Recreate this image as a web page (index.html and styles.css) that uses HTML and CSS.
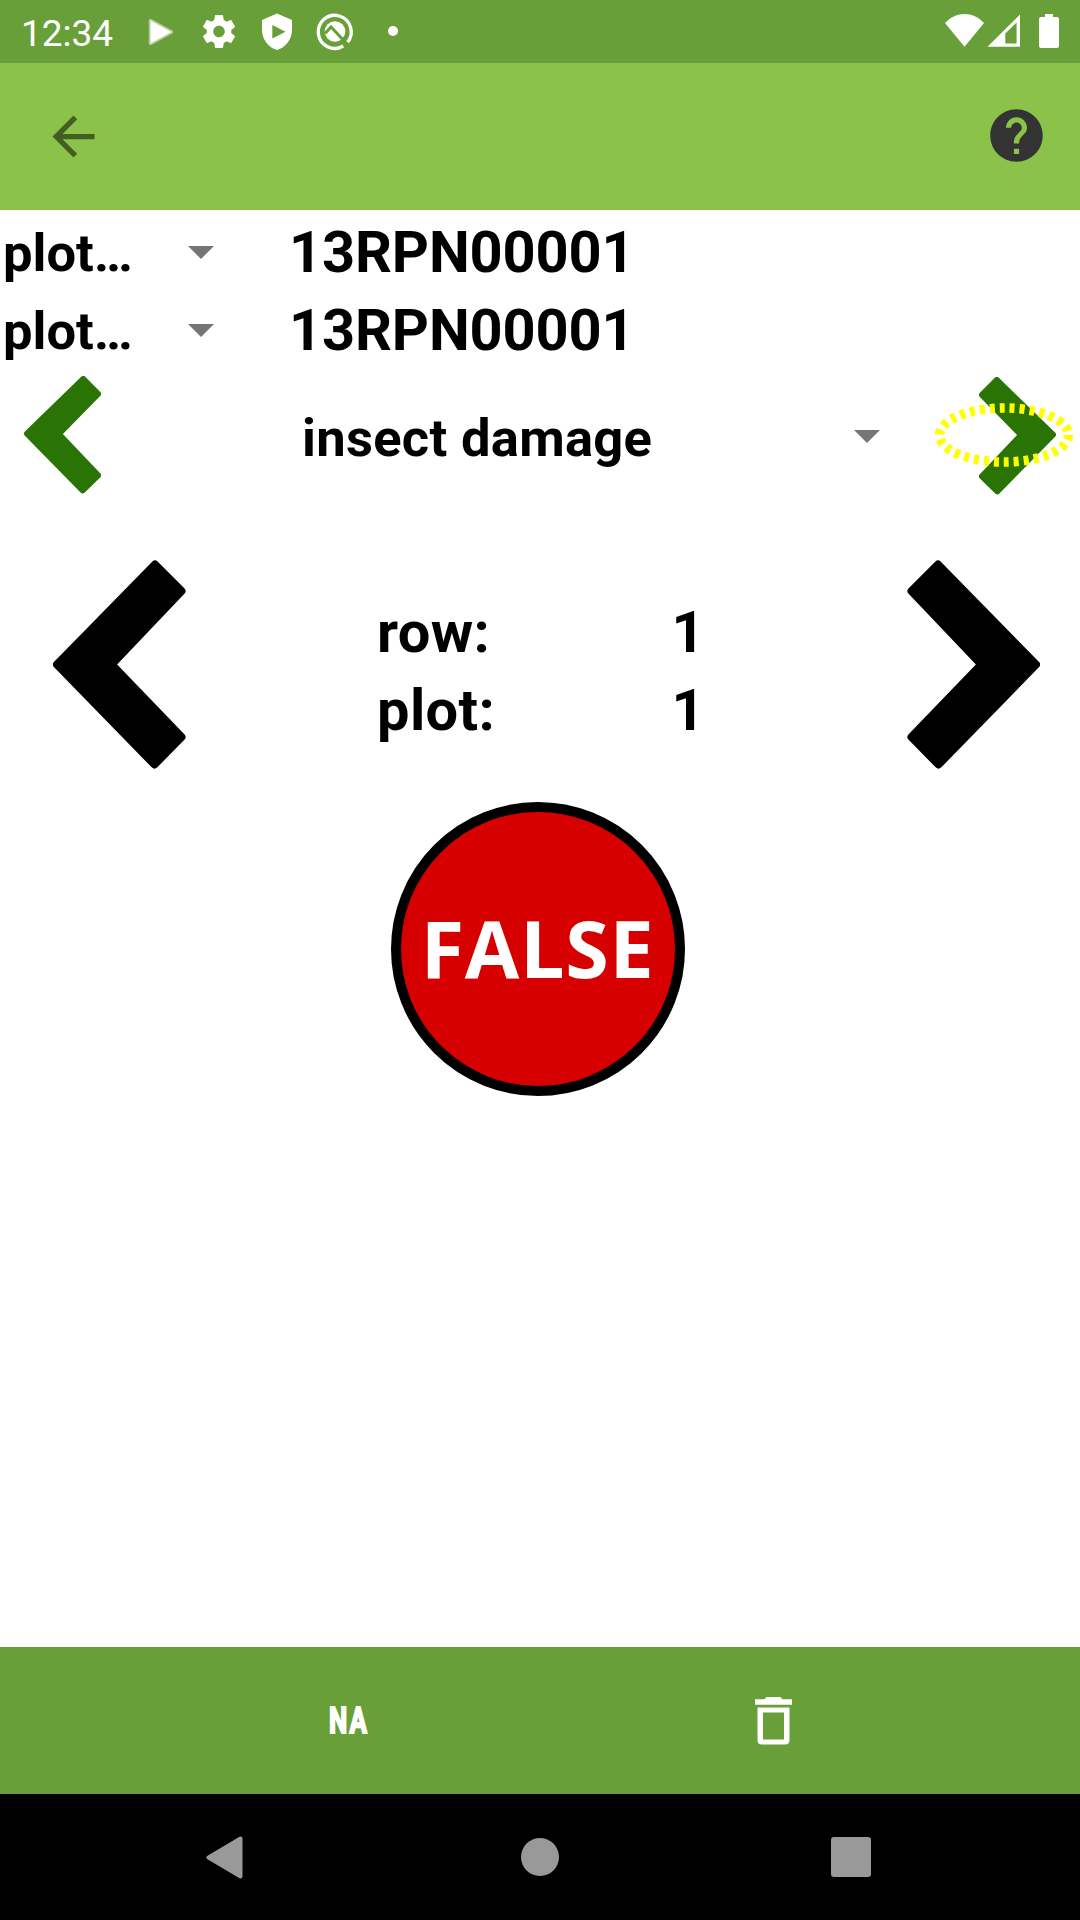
FILE: index.html
```html
<!DOCTYPE html>
<html lang="en">
<head>
<meta charset="utf-8">
<title>Collect</title>
<link rel="stylesheet" href="styles.css">
</head>
<body>
<div class="screen">
  <header class="status-bar">
    <span class="clock">12:34</span>
    <svg class="status-left" width="260" height="63" viewBox="140 0 260 63" fill="#fff">
      <path d="M150.500 20.500V43.500L171.500 32z" stroke="#fff" stroke-opacity=".5" stroke-width="3.500" stroke-linejoin="round"/>
      <g transform="translate(199.300 11.800) scale(1.642)"><path d="M19.430 12.980c.04-.32.07-.64.07-.98s-.03-.66-.07-.98l2.110-1.650c.19-.15.24-.42.12-.64l-2-3.460c-.12-.22-.39-.3-.61-.22l-2.490 1c-.52-.4-1.080-.73-1.690-.98l-.38-2.650C14.460 2.180 14.250 2 14 2h-4c-.25 0-.46.18-.49.42l-.38 2.650c-.61.25-1.170.59-1.690.98l-2.490-1c-.23-.09-.49 0-.61.22l-2 3.460c-.13.22-.07.49.12.64l2.110 1.650c-.04.32-.07.65-.07.98s.03.66.07.98l-2.110 1.650c-.19.15-.24.42-.12.64l2 3.460c.12.22.39.3.61.22l2.490-1c.52.4 1.080.73 1.690.98l.38 2.650c.03.24.24.42.49.42h4c.25 0 .46-.18.49-.42l.38-2.650c.61-.25 1.170-.59 1.690-.98l2.490 1c.23.09.49 0 .61-.22l2-3.460c.12-.22.07-.49-.12-.64l-2.110-1.650zM12 15.500c-1.930 0-3.500-1.570-3.500-3.500s1.570-3.500 3.500-3.500 3.500 1.570 3.500 3.500-1.570 3.500-3.500 3.500z"/></g>
      <path fill-rule="evenodd" d="M277 13.500l-15 6.500v10c0 9.200 6.300 17.600 15 20 8.700-2.400 15-10.800 15-20V20zM272.300 25v13.500L285.500 31.700z"/>
      <g fill="none" stroke="#fff" stroke-width="3.300"><path d="M343.200 46A16.500 16.500 0 1 1 347.500 42.300"/></g>
      <circle cx="335" cy="31.500" r="10.300"/>
      <path d="M325 33.500l6-6.500 16.500 17.500" fill="none" stroke="#689f38" stroke-width="3"/>
      <circle cx="393" cy="31" r="5"/>
    </svg>
    <svg class="status-right" width="120" height="63" viewBox="943 0 120 63" fill="#fff">
      <path d="M964.500 46.800L945 23c11-12 28-12 39 0z"/>
      <path fill-rule="evenodd" d="M987.500 46.800L1020 14.500v32.300zM1005.300 33.500v10h11.300v-21z"/>
      <path d="M1041 17h4v-3h8v3h4q2 0 2 2v27q0 2-2 2h-16q-2 0-2-2V19q0-2 2-2z"/>
    </svg>
  </header>

  <nav class="app-bar">
    <svg class="back" width="63" height="63" viewBox="0 0 24 24"><path d="M20 11H7.830l5.590-5.590L12 4l-8 8 8 8 1.410-1.410L7.830 13H20z"/></svg>
    <svg class="help" width="63" height="63" viewBox="0 0 24 24"><path d="M12 2C6.480 2 2 6.480 2 12s4.480 10 10 10 10-4.480 10-10S17.520 2 12 2zm1 17h-2v-2h2v2zm2.070-7.750l-.9.920C13.450 12.900 13 13.500 13 15h-2v-.5c0-1.100.45-2.100 1.170-2.830l1.240-1.260c.37-.36.59-.86.59-1.410 0-1.100-.9-2-2-2s-2 .9-2 2H8c0-2.210 1.790-4 4-4s4 1.790 4 4c0 .88-.36 1.680-.93 2.250z"/></svg>
  </nav>

  <main class="content">
    <section class="ids">
      <div class="id-row"><span class="label">plot…</span><svg class="caret" width="26" height="13" viewBox="0 0 26 13"><path d="M0 0h26L13 13z"/></svg><span class="value">13RPN00001</span></div>
      <div class="id-row"><span class="label">plot…</span><svg class="caret" width="26" height="13" viewBox="0 0 26 13"><path d="M0 0h26L13 13z"/></svg><span class="value">13RPN00001</span></div>
    </section>

    <section class="trait">
      <svg class="arrow-green" width="77" height="118" viewBox="0 0 77 118"><path d="M3 57.600L59.300 3 74 17.800 34.800 58 74 99.300 58.700 114.300z"/></svg>
      <span class="trait-name">insect damage</span>
      <svg class="caret" width="26" height="13" viewBox="0 0 26 13"><path d="M0 0h26L13 13z"/></svg>
      <div class="next">
        <svg class="arrow-green flip" width="77" height="118" viewBox="0 0 77 118"><path d="M3 57.600L59.300 3 74 17.800 34.800 58 74 99.300 58.700 114.300z"/></svg>
        <svg class="marker" width="140" height="66" viewBox="0 0 140 66"><ellipse cx="70" cy="33" rx="64.500" ry="27"/></svg>
      </div>
    </section>

    <section class="plot-nav">
      <svg class="arrow-black" width="133" height="209" viewBox="0 0 133 209"><path d="M4 104.500L102 4.500 128.500 31 58.600 104.500 128.500 177 101.500 204.500z"/></svg>
      <dl class="position">
        <dt>row:</dt><dd>1</dd>
        <dt>plot:</dt><dd>1</dd>
      </dl>
      <svg class="arrow-black flip" width="133" height="209" viewBox="0 0 133 209"><path d="M4 104.500L102 4.500 128.500 31 58.600 104.500 128.500 177 101.500 204.500z"/></svg>
    </section>

    <button class="toggle"><span>FALSE</span></button>
  </main>

  <footer class="tool-bar">
    <span class="na">NA</span>
    <svg class="trash" width="37" height="48" viewBox="0 0 37 48"><path fill-rule="evenodd" d="M0 2.300h9.500L11.500 0h14l2 2.300H37v5.400H0zM2.500 10.500h32V43q0 4.500-4.500 4.500H7q-4.500 0-4.500-4.500zM8 15.500v27h21v-27z"/></svg>
  </footer>

  <div class="system-nav">
    <svg width="37" height="43" viewBox="0 0 37 43"><path d="M2.500 21.500L34.500 2.500v38z" stroke="#999" stroke-width="4" stroke-linejoin="round"/></svg>
    <svg class="home" width="38" height="38" viewBox="0 0 38 38"><circle cx="19" cy="19" r="19"/></svg>
    <svg width="40" height="40" viewBox="0 0 40 40"><rect width="40" height="40" rx="3"/></svg>
  </div>
</div>
</body>
</html>
```
FILE: styles.css
```css
* { box-sizing: border-box; }
body { margin: 0; background: #fff; font-family: Roboto, sans-serif; color: #000; }
svg { display: block; flex: none; }

.screen { width: 1080px; height: 1920px; display: flex; flex-direction: column; }

.status-bar { height: 63px; background: #689f38; display: flex; align-items: center; padding: 0 17px 0 21px; }
.clock { width: 119px; font-size: 37px; line-height: 63px; padding-top: 3px; color: #fff; }
.status-right { margin-left: auto; }

.app-bar { height: 147px; background: #8bc34a; display: flex; align-items: center; justify-content: space-between; padding: 0 32px 0 42px; }
.back { fill: #435e23; }
.help { fill: #333; margin-bottom: 2px; }

.content { flex: 1; display: flex; flex-direction: column; }
.ids { padding-top: 3px; }
.id-row { height: 78px; display: flex; align-items: flex-start; font-weight: 700; line-height: 78px; }
.label { width: 187.5px; padding: 2px 0 0 3px; font-size: 52.5px; line-height: 76px; }
.value { margin-left: 75.5px; font-size: 57.75px; letter-spacing: -.15px; }
.caret { fill: #757575; }
.id-row .caret { margin-top: 33px; }

.trait { height: 132px; display: flex; align-items: center; padding-left: 24px; }
.arrow-green { fill: #2a7406; stroke: #2a7406; stroke-width: 6; stroke-linejoin: round; }
.trait-name { width: 552px; margin-left: 201px; padding-top: 5px; font-size: 52.5px; font-weight: 700; letter-spacing: .3px; }
.trait .caret { margin-top: 2px; }
.next { position: relative; margin-left: 98.5px; padding-top: 2px; }
.flip { transform: scaleX(-1); }
.marker { position: absolute; left: -45px; top: 27px; fill: none; stroke: #ff0; stroke-width: 9.5; }
.marker ellipse { stroke-dasharray: 5 5; }

.plot-nav { margin-top: 59px; height: 209px; display: flex; align-items: center; padding: 0 40px 0 53px; }
.arrow-black { fill: #000; stroke: #000; stroke-width: 8; stroke-linejoin: round; }
.position { margin: 0 auto 0 191px; display: grid; grid-template-columns: 294.5px auto; font-size: 57.75px; font-weight: 700; line-height: 78px; letter-spacing: .4px; padding-top: 13px; }
.position dd { margin: 0; }

.toggle { margin: 33px 0 0 390.5px; width: 294px; height: 294px; padding: 0 0 3px; border: 10.5px solid #000; border-radius: 50%; background: #d60000; color: #fff; font: 700 79px/1 "Open Sans", sans-serif; letter-spacing: .7px; display: flex; align-items: center; justify-content: center; }

.tool-bar { height: 147px; background: #689f38; display: flex; align-items: center; padding-left: 329px; }
.na { width: 426px; color: #fff; font-size: 37px; font-weight: 700; letter-spacing: 3px; -webkit-text-stroke: 2px #fff; transform: scaleX(.7); transform-origin: left; }
.trash { fill: #fff; }

.system-nav { height: 126px; background: #000; display: flex; align-items: center; justify-content: space-between; padding: 0 209px 0 206px; fill: #999; }
.home { margin-left: 5px; }
```
